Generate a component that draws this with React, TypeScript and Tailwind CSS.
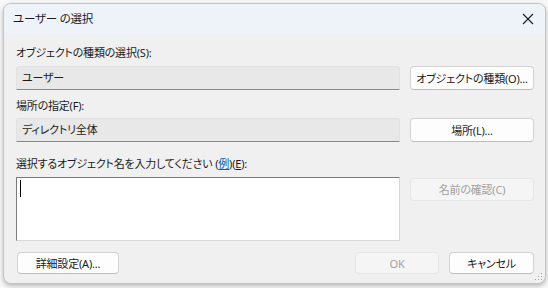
import React from "react";

const font = { fontFamily: '"Noto Sans", "Noto Sans CJK JP", sans-serif' };
const txt = "text-[11px] tracking-[-0.2px] text-[#1b1b1b] [font-feature-settings:'palt'] whitespace-nowrap";

function Btn({ children, disabled, className = "" }: { children: React.ReactNode; disabled?: boolean; className?: string }) {
  return (
    <div
      className={
        "shrink-0 flex items-center justify-center rounded-[4px] border text-[11px] tracking-[-0.2px] leading-none whitespace-nowrap [font-feature-settings:'palt'] " +
        (disabled
          ? "bg-[#f5f5f5] border-[#e6e6e6] text-[#a0a0a0] "
          : "bg-[#fdfdfd] border-[#d3d3d3] border-b-[#bdbdbd] text-[#1b1b1b] ") +
        className
      }
    >
      {children}
    </div>
  );
}

function Field({ children }: { children: React.ReactNode }) {
  return (
    <div className={"shrink-0 h-[24px] w-[384px] flex items-center pl-[5px] bg-[#e8e8e8] border border-[#e2e2e2] border-b-[#8a8a8a] rounded-t-[3px] " + txt}>
      {children}
    </div>
  );
}

export default function App() {
  return (
    <div className="w-[548px] h-[288px] bg-[#f7f7f7] pt-[3px] pl-[3px] overflow-hidden" style={font}>
      <div className="w-[543px] h-[281px] rounded-[8px] border border-[#c4c4c4] bg-[#f0f0f0] overflow-hidden flex flex-col shadow-[0_2px_4px_rgba(0,0,0,0.25)] relative">
        {/* title bar */}
        <div className="h-[29px] shrink-0 bg-[#eef3f9] flex items-center justify-between pl-[9px] pr-[9px]">
          <span className="text-[11.5px] tracking-[-0.2px] text-[#1b1b1b] [font-feature-settings:'palt']">ユーザー の選択</span>
          <svg width="12" height="12" viewBox="0 0 12 12" className="mr-[2px]">
            <path d="M1 1 L11 11 M11 1 L1 11" stroke="#1b1b1b" strokeWidth="1.1" />
          </svg>
        </div>
        {/* body */}
        <div className="flex flex-col pl-[12px] pr-[11px]">
          <div className={"mt-[12px] h-[16px] flex items-center " + txt}>
            オブジェクトの種類の選択(S):
          </div>
          <div className="mt-[5px] flex gap-[10px]">
            <Field>ユーザー</Field>
            <Btn className="w-[124px] h-[24px]">オブジェクトの種類(O)...</Btn>
          </div>
          <div className={"mt-[8px] h-[16px] flex items-center " + txt}>
            場所の指定(F):
          </div>
          <div className="mt-[4px] flex gap-[10px]">
            <Field>ディレクトリ全体</Field>
            <Btn className="w-[124px] h-[24px]">場所(L)...</Btn>
          </div>
          <div className={"mt-[14px] h-[16px] flex items-center " + txt}>
            選択するオブジェクト名を入力してください (<span className="text-[#0a5fb4] underline">例</span>)(<span className="underline">E</span>):
          </div>
          <div className="mt-[5px] flex gap-[10px] items-start">
            <div className="shrink-0 w-[384px] h-[64px] bg-white border border-[#d8d8d8] border-t-[#7a7a7a] border-l-[#7a7a7a] pt-[2px] pl-[3px]">
              <div className="w-[1px] h-[17px] bg-black" />
            </div>
            <Btn disabled className="w-[124px] h-[23px] mt-[1px]">名前の確認(C)</Btn>
          </div>
          <div className="mt-[11px] flex items-center">
            <Btn className="w-[102px] h-[22px] ml-[1px]">詳細設定(A)...</Btn>
            <div className="flex-1" />
            <Btn disabled className="w-[84px] h-[22px]">OK</Btn>
            <Btn className="w-[85px] h-[22px] ml-[10px]">キャンセル</Btn>
          </div>
        </div>
        <svg width="8" height="8" viewBox="0 0 8 8" className="absolute right-[2px] bottom-[2px]">
          <rect x="6" y="0" width="1" height="1" fill="#a0a0a0" />
          <rect x="3" y="3" width="1" height="1" fill="#a0a0a0" />
          <rect x="6" y="3" width="1" height="1" fill="#a0a0a0" />
          <rect x="0" y="6" width="1" height="1" fill="#a0a0a0" />
          <rect x="3" y="6" width="1" height="1" fill="#a0a0a0" />
          <rect x="6" y="6" width="1" height="1" fill="#a0a0a0" />
        </svg>
      </div>
    </div>
  );
}
